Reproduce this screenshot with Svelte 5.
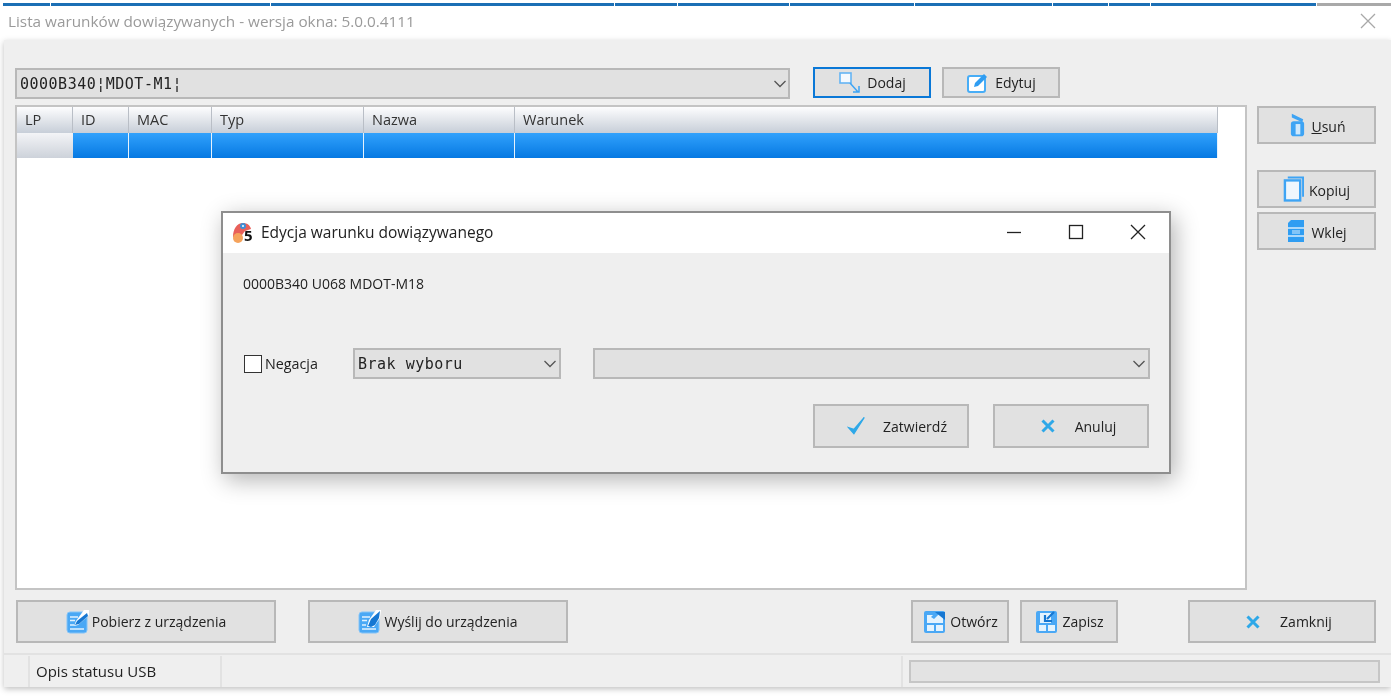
<script>
  const segments = [47, 219, 343, 62, 111, 124, 137, 55, 41, 165];
  const columns = [
    { label: "LP", width: 56 },
    { label: "ID", width: 56 },
    { label: "MAC", width: 83 },
    { label: "Typ", width: 152 },
    { label: "Nazwa", width: 151 },
    { label: "Warunek", width: 703 }
  ];
</script>

{#snippet cross()}
  <svg class="ico" width="16" height="16" viewBox="0 0 16 16"><path d="M2.500 2.500l11 11M13.500 2.500l-11 11" stroke="#2ea8e8" stroke-width="3" fill="none"/></svg>
{/snippet}

{#snippet chevron()}
  <svg class="chev" width="14" height="8" viewBox="0 0 14 8"><path d="M1.500 1l5.500 5.500L12.500 1" stroke="#555" stroke-width="1.300" fill="none"/></svg>
{/snippet}

{#snippet docIcon(kind)}
  <svg class="ico" width="23" height="24" viewBox="0 0 23 24">
    <rect x="1" y="2" width="20" height="21" rx="3" fill="#4aa8f5" stroke="#84c4f8" stroke-width="1"/>
    <path d="M4 7h8M4 10.500h5M4 15h4M4 19h14" stroke="#e2f1fe" stroke-width="1.300"/>
    {#if kind === "down"}
      <path d="M23 0v5l-3 3-8 7-4 1 2-5 8-11z" fill="#fff"/>
      <path d="M21 3L11 11l-2 4 4-1 9-8z" fill="#1677d2"/>
    {:else}
      <path d="M23 0l-1 8-6 9H9l2-7 7-10z" fill="#fff"/>
      <path d="M22 1l-9 8-3 7 3 1 4-2 4-7z" fill="#1677d2"/>
    {/if}
  </svg>
{/snippet}

{#snippet diskIcon(kind)}
  <svg class="ico" width="24" height="24" viewBox="1 0 22 24">
    <path d="M4 1h17a2 2 0 0 1 2 2v18a2 2 0 0 1-2 2H4a2 2 0 0 1-2-2V3a2 2 0 0 1 2-2z" fill="#4aa8f5"/>
    <rect x="5" y="15" width="7" height="6" fill="#e4f3fe"/>
    <rect x="14" y="15" width="7" height="6" fill="#e4f3fe"/>
    {#if kind === "open"}
      <path d="M5 13V5h6l-2 2 3 2 6-6 3 4v6z" fill="#e4f3fe"/>
      <path d="M13 2h10v8z" fill="#1677d2"/>
    {:else}
      <rect x="6" y="3" width="11" height="10" fill="#e4f3fe"/>
      <path d="M20 2l-7 7M11 5v6h7" stroke="#1677d2" stroke-width="2.200" fill="none"/>
    {/if}
  </svg>
{/snippet}

<div class="screen">
  <div class="progress">
    {#each segments as w}
      <span class="seg" style={`width:${w}px`}></span>
    {/each}
    <span class="seg rest"></span>
  </div>

  <header class="titlebar">
    <span class="title">Lista warunków dowiązywanych - wersja okna: 5.0.0.4111</span>
    <svg class="close-main" width="16" height="16" viewBox="0 0 16 16"><path d="M1 1l14 14M15 1L1 15" stroke="#a8a8a8" stroke-width="1.300" fill="none"/></svg>
  </header>

  <main class="panel">
    <div class="top-row">
      <div class="combo device">
        <span class="mono">0000B340¦MDOT-M1¦</span>
        {@render chevron()}
      </div>
      <button class="btn top focused">
        <svg class="ico" width="24" height="24" viewBox="0 0 24 24">
          <rect x="2" y="2" width="11" height="10" fill="#f4f9fe" stroke="#64b5f4" stroke-width="1.600"/>
          <path d="M12 12l8 9M21 15v6h-6" stroke="#3ea4f4" stroke-width="1.500" fill="none"/>
        </svg>
        Dodaj
      </button>
      <button class="btn top">
        <svg class="ico" width="24" height="24" viewBox="0 0 24 24">
          <rect x="2" y="5" width="17" height="16" rx="2" fill="#fff" stroke="#48adf6" stroke-width="2"/>
          <path d="M8 16l1-4 9-9 3 3-9 9z" fill="#2f9df2"/>
        </svg>
        Edytuj
      </button>
    </div>

    <div class="middle">
      <div class="table-box">
        <div class="row head">
          {#each columns as c}
            <div class="th" style={`width:${c.width}px`}>{c.label}</div>
          {/each}
        </div>
        <div class="row body-row">
          {#each columns as c, i}
            <div class={i === 0 ? "td marker" : "td"} style={`width:${c.width}px`}></div>
          {/each}
        </div>
      </div>

      <div class="side">
        <button class="btn side-btn delete">
          <svg class="ico" width="17" height="26" viewBox="0 0 18 26">
            <rect x="2" y="9" width="14" height="16" rx="3" fill="#3ea4f4"/>
            <rect x="7" y="12" width="5" height="11" fill="#cfe8fc"/>
            <path d="M3 1l12 6-1 3L3 5z" fill="#3ea4f4"/>
          </svg>
          <span><u>U</u>suń</span>
        </button>
        <button class="btn side-btn copy">
          <svg class="ico" width="21" height="26" viewBox="0 0 22 26">
            <path d="M5 1h16v20" fill="none" stroke="#3ea4f4" stroke-width="2"/>
            <rect x="2" y="4" width="16" height="21" fill="#eef6fd" stroke="#3ea4f4" stroke-width="2.500"/>
          </svg>
          <span>Kopiuj</span>
        </button>
        <button class="btn side-btn">
          <svg class="ico" width="20" height="24" viewBox="0 0 20 24">
            <path d="M5 1h13v22H2V4z" fill="#2f9df2"/>
            <path d="M2 9h16M2 17h16" stroke="#d5ecfd" stroke-width="1.500"/>
            <path d="M6 12h8M6 14h8" stroke="#d5ecfd" stroke-width="1"/>
          </svg>
          <span>Wklej</span>
        </button>
      </div>
    </div>

    <div class="actions">
      <button class="btn wide">{@render docIcon("down")} Pobierz z urządzenia</button>
      <button class="btn wide">{@render docIcon("up")} Wyślij do urządzenia</button>
      <button class="btn file open">{@render diskIcon("open")} Otwórz</button>
      <button class="btn file">{@render diskIcon("save")} Zapisz</button>
      <button class="btn quit">{@render cross()} <span>Zamknij</span></button>
    </div>

    <footer class="status">
      <div class="cell grip"></div>
      <div class="cell usb">Opis statusu USB</div>
      <div class="cell filler"></div>
      <div class="cell progress-cell"><div class="bar"></div></div>
    </footer>
  </main>

  <section class="dialog">
    <div class="dlg-title">
      <svg class="logo" width="24" height="24" viewBox="0 0 24 24">
        <path d="M1 17C1 9 5 3 11 3c4 0 7 2 8 6l-6 2-3 4-2 5z" fill="#e8605a"/>
        <circle cx="6" cy="18" r="5" fill="#f5a35c"/>
        <circle cx="11" cy="6" r="3" fill="#3c8fd8"/>
        <circle cx="11" cy="6" r="1" fill="#fff"/>
        <text x="12" y="21" class="five">5</text>
      </svg>
      <span class="dlg-name">Edycja warunku dowiązywanego</span>
      <div class="win-ctrls">
        <svg width="16" height="16" viewBox="0 0 16 16"><path d="M1 8.500h14" stroke="#222" stroke-width="1.300"/></svg>
        <svg width="16" height="16" viewBox="0 0 16 16"><rect x="1.500" y="1.500" width="13" height="13" fill="none" stroke="#222" stroke-width="1.300"/></svg>
        <svg width="16" height="16" viewBox="0 0 16 16"><path d="M1 1l14 14M15 1L1 15" stroke="#222" stroke-width="1.300"/></svg>
      </div>
    </div>
    <div class="dlg-body">
      <p class="device-line">0000B340 U068 MDOT-M18</p>
      <div class="dlg-fields">
        <span class="check"></span>
        <span class="neg">Negacja</span>
        <div class="combo choice"><span class="mono">Brak wyboru</span>{@render chevron()}</div>
        <div class="combo value">{@render chevron()}</div>
      </div>
      <div class="dlg-buttons">
        <button class="btn dlg-btn confirm">
          <svg class="ico" width="19" height="22" viewBox="0 0 22 24"><path d="M2 14l6 7L20 2 8 16z" fill="#2ea8e8" stroke="#2ea8e8" stroke-width="1.500"/></svg>
          <span>Zatwierdź</span>
        </button>
        <button class="btn dlg-btn cancel">{@render cross()} <span>Anuluj</span></button>
      </div>
    </div>
  </section>
</div>

<style>
  :global(body) {
    margin: 0;
    background: #fff;
  }
  .screen {
    position: relative;
    width: 1391px;
    height: 697px;
    overflow: hidden;
    background: #fff;
    color: #222;
    font-family: "Open Sans", "Noto Sans", sans-serif;
    font-size: 14px;
    filter: blur(0.4px);
  }

  .progress {
    display: flex;
    gap: 1px;
    padding: 3px 0 0 3px;
    height: 3px;
  }
  .seg {
    height: 3px;
    background: #1b6fb5;
  }
  .seg.rest {
    flex: 1;
    background: #a9a9a9;
  }

  .titlebar {
    display: flex;
    align-items: center;
    justify-content: space-between;
    box-sizing: border-box;
    height: 34px;
    padding: 0 15px 4px 8px;
  }
  .title {
    color: #9a9a9a;
    font-size: 15.300px;
  }

  .panel {
    margin-left: 4px;
    height: 647px;
    padding: 27px 0 0 11px;
    box-sizing: border-box;
    display: flex;
    flex-direction: column;
    background: #efefef;
    box-shadow: 0 2px 6px rgba(0, 0, 0, 0.25);
  }

  .btn {
    display: flex;
    align-items: center;
    justify-content: center;
    box-sizing: border-box;
    padding: 0;
    background: #e1e1e1;
    border: 2px solid #b8b8b8;
    color: #222;
    font: inherit;
  }
  .btn.focused {
    border-color: #0a78d7;
  }
  .ico {
    flex: none;
  }

  .combo {
    display: flex;
    align-items: center;
    justify-content: space-between;
    box-sizing: border-box;
    height: 31px;
    padding: 1px 2px 0 3px;
    background: #e1e1e1;
    border: 2px solid #b8b8b8;
  }
  .mono {
    font-family: "DejaVu Sans Mono", "Liberation Mono", monospace;
    font-size: 15px;
    letter-spacing: 0.5px;
    color: #222;
  }
  .chev {
    margin-right: 0;
  }

  .top-row {
    display: flex;
    align-items: flex-start;
    height: 38px;
  }
  .device {
    width: 775px;
    margin-top: 1px;
  }
  .device .chev {
    margin-right: -1px;
  }
  .btn.top {
    width: 118px;
    height: 31px;
    gap: 5px;
    margin-left: 11px;
  }
  .btn.top.focused {
    margin-left: 23px;
  }

  .middle {
    display: flex;
    align-items: flex-start;
  }
  .table-box {
    box-sizing: border-box;
    width: 1232px;
    height: 485px;
    background: #fff;
    border: 2px solid #c4c4c4;
  }
  .row {
    display: flex;
  }
  .th {
    box-sizing: border-box;
    height: 26px;
    padding: 3px 0 0 8px;
    font-size: 14.500px;
    color: #333;
    background: linear-gradient(#fdfdfe, #c7ced8);
    border-right: 1px solid #b9bec6;
  }
  .td {
    box-sizing: border-box;
    height: 25px;
    background: linear-gradient(#31a1fc, #0679e2);
    border-right: 1px solid #e6f2fc;
  }
  .td.marker {
    background: linear-gradient(#f3f4f7, #cdd2da);
    border-right: 0;
  }

  .side {
    display: flex;
    flex-direction: column;
    margin-left: 10px;
    padding-top: 1px;
  }
  .side-btn {
    width: 119px;
    height: 38px;
    gap: 5px;
    margin-bottom: 4px;
    padding-top: 2px;
  }
  .side-btn .ico {
    margin-top: -2px;
  }
  .side-btn.delete {
    margin-bottom: 26px;
    padding-left: 2px;
  }

  .actions {
    display: flex;
    margin-top: 10px;
    margin-left: 1px;
    height: 43px;
  }
  .actions .btn {
    height: 43px;
  }
  .btn.wide {
    width: 260px;
    gap: 3px;
    margin-right: 32px;
  }
  .btn.file {
    width: 98px;
    gap: 4px;
    margin-right: 11px;
  }
  .btn.file.open {
    margin-left: 311px;
  }
  .btn.quit {
    width: 188px;
    margin-left: 59px;
    padding-left: 13px;
    gap: 19px;
  }

  .status {
    display: flex;
    margin: 10px 0 0 -11px;
    height: 34px;
    padding-top: 1px;
    box-sizing: border-box;
    border-top: 2px solid #e2e2e2;
  }
  .cell {
    border-right: 2px solid #e2e2e2;
    box-sizing: border-box;
  }
  .grip {
    width: 26px;
  }
  .usb {
    width: 192px;
    padding: 5px 0 0 6px;
    font-size: 15px;
  }
  .filler {
    width: 681px;
  }
  .progress-cell {
    flex: 1;
    padding: 4px 0 0 6px;
    border-right: 0;
  }
  .bar {
    width: 471px;
    height: 23px;
    box-sizing: border-box;
    background: #e3e3e3;
    border: 2px solid #c6c6c6;
  }

  /* child window floating over the table */
  .dialog {
    position: absolute;
    left: 221px;
    top: 211px;
    box-sizing: border-box;
    width: 950px;
    height: 263px;
    background: #efefef;
    border: 2px solid #8e8e8e;
    box-shadow: 4px 6px 22px rgba(0, 0, 0, 0.3);
  }
  .dlg-title {
    display: flex;
    align-items: center;
    box-sizing: border-box;
    height: 40px;
    padding: 0 0 2px 9px;
    background: #fff;
  }
  .dlg-name {
    margin-left: 5px;
    font-size: 15.500px;
  }
  .five {
    font: 700 15px "Open Sans", sans-serif;
    fill: #111;
  }
  .win-ctrls {
    display: flex;
    gap: 46px;
    margin-left: auto;
    margin-right: 23px;
  }
  .dlg-body {
    padding-left: 20px;
  }
  .device-line {
    margin: 0;
    padding-top: 21px;
    line-height: 19px;
    font-size: 14px;
  }
  .dlg-fields {
    display: flex;
    align-items: center;
    margin-top: 55px;
    height: 31px;
  }
  .check {
    box-sizing: border-box;
    width: 18px;
    height: 18px;
    margin-left: 1px;
    background: #fff;
    border: 1.500px solid #333;
  }
  .neg {
    width: 88px;
    margin-left: 3px;
    font-size: 14.300px;
  }
  .choice {
    width: 208px;
    margin-right: 32px;
  }
  .value {
    width: 557px;
    justify-content: flex-end;
  }
  .dlg-buttons {
    display: flex;
    gap: 24px;
    margin: 25px 0 0 570px;
  }
  .dlg-btn {
    width: 156px;
    height: 44px;
  }
  .confirm {
    padding-left: 12px;
    gap: 17px;
  }
  .cancel {
    padding-left: 14px;
    gap: 19px;
  }
</style>
